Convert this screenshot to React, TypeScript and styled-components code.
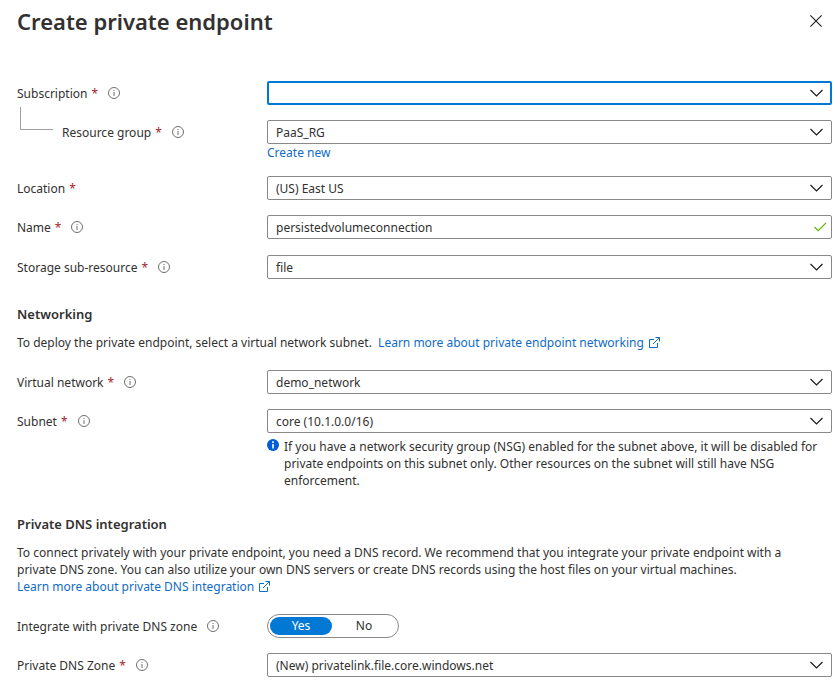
import React, { useId, useState } from 'react';
import styled, { createGlobalStyle, css } from 'styled-components';

const GlobalStyle = createGlobalStyle`
  *, *::before, *::after { box-sizing: border-box; }
  body {
    margin: 0;
    background: #fff;
    color: #323130;
    font-family: 'Noto Sans', 'Open Sans', sans-serif;
    font-size: 12px;
    line-height: 17px;
  }
`;

const Panel = styled.main`
  padding: 0 8px 16px 17px;
`;

const Header = styled.header`
  display: flex;
  align-items: center;
  justify-content: space-between;
  height: 42px;
  margin-bottom: 39px;
`;

const Title = styled.h1`
  margin: 0;
  font-size: 22px;
  line-height: 32px;
  font-weight: 600;
`;

const CloseButton = styled.button`
  display: flex;
  align-items: center;
  justify-content: center;
  width: 32px;
  height: 32px;
  padding: 0;
  border: 0;
  background: transparent;
  color: #1b1a19;
  cursor: pointer;
`;

const Section = styled.section`
  & + & { margin-top: 25px; }
`;

const SectionTitle = styled.h2`
  margin: 0 0 10px;
  font-size: 13px;
  line-height: 20px;
  font-weight: 600;
`;

const Paragraph = styled.p`
  margin: 0 0 19px;
  padding-right: 24px;
`;

const Rows = styled.div`
  display: grid;
  gap: 15px;
`;

const Row = styled.div<{ $validated?: boolean }>`
  display: grid;
  grid-template-columns: 250px minmax(0, 1fr);
  align-items: start;
  min-height: ${(p) => (p.$validated ? 25 : 24)}px;
`;

const LabelCell = styled.div<{ $nested?: boolean }>`
  display: flex;
  align-items: center;
  height: 24px;
  padding-left: ${(p) => (p.$nested ? 45 : 0)}px;
  position: relative;
  ${(p) =>
    p.$nested &&
    css`
      &::before {
        content: '';
        position: absolute;
        left: 3px;
        bottom: 14px;
        width: 33px;
        height: 23px;
        border-left: 1px solid #a19f9d;
        border-bottom: 1px solid #a19f9d;
      }
    `}
`;

const Required = styled.span`
  color: #a4262c;
  margin-left: 4px;
`;

const InfoButton = styled.button`
  display: flex;
  padding: 0;
  margin-left: 10px;
  border: 0;
  background: transparent;
  color: #706e6c;
  cursor: pointer;
`;

const fieldStyle = css`
  display: block;
  width: 100%;
  height: 24px;
  padding: 0 32px 0 8px;
  border: 1px solid #8a8886;
  border-radius: 2px;
  background: #fff;
  color: inherit;
  font: inherit;
  outline: none;
`;

const Field = styled.div`
  position: relative;
`;

const SelectBox = styled.select<{ $active?: boolean }>`
  ${fieldStyle}
  appearance: none;
  ${(p) =>
    p.$active &&
    css`
      border: 2px solid #0078d4;
    `}
`;

const TextBox = styled.input`
  ${fieldStyle}
`;

const FieldIcon = styled.span<{ $tone?: 'valid' }>`
  position: absolute;
  top: 0;
  right: ${(p) => (p.$tone ? 5 : 9)}px;
  display: flex;
  align-items: center;
  height: 24px;
  color: ${(p) => (p.$tone ? '#5db300' : '#1b1a19')};
  pointer-events: none;
`;

const Link = styled.a`
  color: #0f6cc7;
  text-decoration: none;
  &:hover { text-decoration: underline; }
`;

const ExternalSvg = styled.svg`
  margin-left: 5px;
  vertical-align: -1px;
`;

const Hint = styled.div`
  display: flex;
  gap: 5px;
  padding-top: 5px;
`;

const HintIcon = styled.svg`
  flex: none;
`;

const Toggle = styled.div`
  display: inline-flex;
  width: 132px;
  height: 24px;
  padding: 2px;
  border: 1px solid #8a8886;
  border-radius: 12px;
`;

const ToggleOption = styled.label<{ $on: boolean }>`
  flex: ${(p) => (p.$on ? '0 0 62px' : '1')};
  border-radius: 9px;
  line-height: 18px;
  text-align: center;
  cursor: pointer;
  background: ${(p) => (p.$on ? '#0078d4' : 'transparent')};
  color: ${(p) => (p.$on ? '#fff' : 'inherit')};
`;

const HiddenRadio = styled.input`
  position: absolute;
  width: 1px;
  height: 1px;
  margin: 0;
  opacity: 0;
`;

const Chevron = () => (
  <svg width="13" height="8" viewBox="0 0 13 8" fill="none" stroke="currentColor" strokeWidth="1.2" aria-hidden="true">
    <path d="M.5 1 6.5 7 12.5 1" />
  </svg>
);

const Check = () => (
  <svg width="14" height="10" viewBox="0 0 14 10" fill="none" stroke="currentColor" strokeWidth="1.2" aria-hidden="true">
    <path d="M1.5 5 5.2 8.6 13 .8" />
  </svg>
);

const External = () => (
  <ExternalSvg width="11" height="11" viewBox="0 0 11 11" fill="none" stroke="currentColor" aria-hidden="true">
    <path d="M5 2.5H.5v8h8V6M6.5.5h4v4M10.5.5 4 7" />
  </ExternalSvg>
);

function Info({ about }: { about: string }) {
  return (
    <InfoButton type="button" aria-label={`About ${about}`}>
      <svg width="12" height="12" viewBox="0 0 12 12" fill="none" stroke="currentColor" aria-hidden="true">
        <circle cx="6" cy="6" r="5.5" />
        <path d="M6 5v4M6 3v1" />
      </svg>
    </InfoButton>
  );
}

type LabelProps = { id: string; text: string; required?: boolean; info?: boolean; nested?: boolean };

function FieldLabel({ id, text, required, info, nested }: LabelProps) {
  return (
    <LabelCell $nested={nested}>
      <label htmlFor={id}>
        {text}
        {required && <Required>*</Required>}
      </label>
      {info && <Info about={text} />}
    </LabelCell>
  );
}

type SelectRowProps = {
  label: string;
  value: string;
  info?: boolean;
  nested?: boolean;
  active?: boolean;
  children?: React.ReactNode;
};

function SelectRow({ label, value, info = true, nested, active, children }: SelectRowProps) {
  const id = useId();
  return (
    <Row>
      <FieldLabel id={id} text={label} required info={info} nested={nested} />
      <div>
        <Field>
          <SelectBox id={id} defaultValue={value} $active={active} required>
            <option value={value}>{value}</option>
          </SelectBox>
          <FieldIcon><Chevron /></FieldIcon>
        </Field>
        {children}
      </div>
    </Row>
  );
}

function NameRow() {
  const id = useId();
  return (
    <Row $validated>
      <FieldLabel id={id} text="Name" required info />
      <Field>
        <TextBox id={id} type="text" defaultValue="persistedvolumeconnection" spellCheck={false} />
        <FieldIcon $tone="valid"><Check /></FieldIcon>
      </Field>
    </Row>
  );
}

function DnsToggleRow() {
  const [choice, setChoice] = useState('Yes');
  const id = useId();
  return (
    <Row>
      <LabelCell>
        <span id={id}>Integrate with private DNS zone</span>
        <Info about="private DNS zone integration" />
      </LabelCell>
      <Toggle role="radiogroup" aria-labelledby={id}>
        {['Yes', 'No'].map((option) => (
          <ToggleOption key={option} $on={choice === option}>
            <HiddenRadio
              type="radio"
              name="dns-integration"
              checked={choice === option}
              onChange={() => setChoice(option)}
            />
            {option}
          </ToggleOption>
        ))}
      </Toggle>
    </Row>
  );
}

export default function App() {
  return (
    <>
      <GlobalStyle />
      <Panel>
        <Header>
          <Title>Create private endpoint</Title>
          <CloseButton type="button" aria-label="Close">
            <svg width="12" height="12" viewBox="0 0 12 12" stroke="currentColor" strokeWidth="1.1" aria-hidden="true">
              <path d="M.4 .4l11.2 11.2M11.6 .4.4 11.6" />
            </svg>
          </CloseButton>
        </Header>

        <Section>
          <Rows>
            <SelectRow label="Subscription" value="" active />
            <SelectRow label="Resource group" value="PaaS_RG" nested>
              <Link href="#create">Create new</Link>
            </SelectRow>
            <SelectRow label="Location" value="(US) East US" info={false} />
            <NameRow />
            <SelectRow label="Storage sub-resource" value="file" />
          </Rows>
        </Section>

        <Section>
          <SectionTitle>Networking</SectionTitle>
          <Paragraph>
            To deploy the private endpoint, select a virtual network subnet.{'\u00a0 '}
            <Link href="#networking">Learn more about private endpoint networking<External /></Link>
          </Paragraph>
          <Rows>
            <SelectRow label="Virtual network" value="demo_network" />
            <SelectRow label="Subnet" value="core (10.1.0.0/16)">
              <Hint>
                <HintIcon width="12" height="14" viewBox="0 0 12 14" aria-hidden="true">
                  <circle cx="6" cy="7" r="6" fill="#015cda" />
                  <path d="M6 6v4.5M6 3.3v1.6" stroke="#fff" strokeWidth="1.6" />
                </HintIcon>
                <span>
                  If you have a network security group (NSG) enabled for the subnet above, it will be disabled for
                  private endpoints on this subnet only. Other resources on the subnet will still have NSG
                  enforcement.
                </span>
              </Hint>
            </SelectRow>
          </Rows>
        </Section>

        <Section>
          <SectionTitle>Private DNS integration</SectionTitle>
          <Paragraph>
            To connect privately with your private endpoint, you need a DNS record. We recommend that you integrate
            your private endpoint with a private DNS zone. You can also utilize your own DNS servers or create DNS
            records using the host files on your virtual machines.
            <br />
            <Link href="#dns">Learn more about private DNS integration<External /></Link>
          </Paragraph>
          <Rows>
            <DnsToggleRow />
            <SelectRow label="Private DNS Zone" value="(New) privatelink.file.core.windows.net" />
          </Rows>
        </Section>
      </Panel>
    </>
  );
}
